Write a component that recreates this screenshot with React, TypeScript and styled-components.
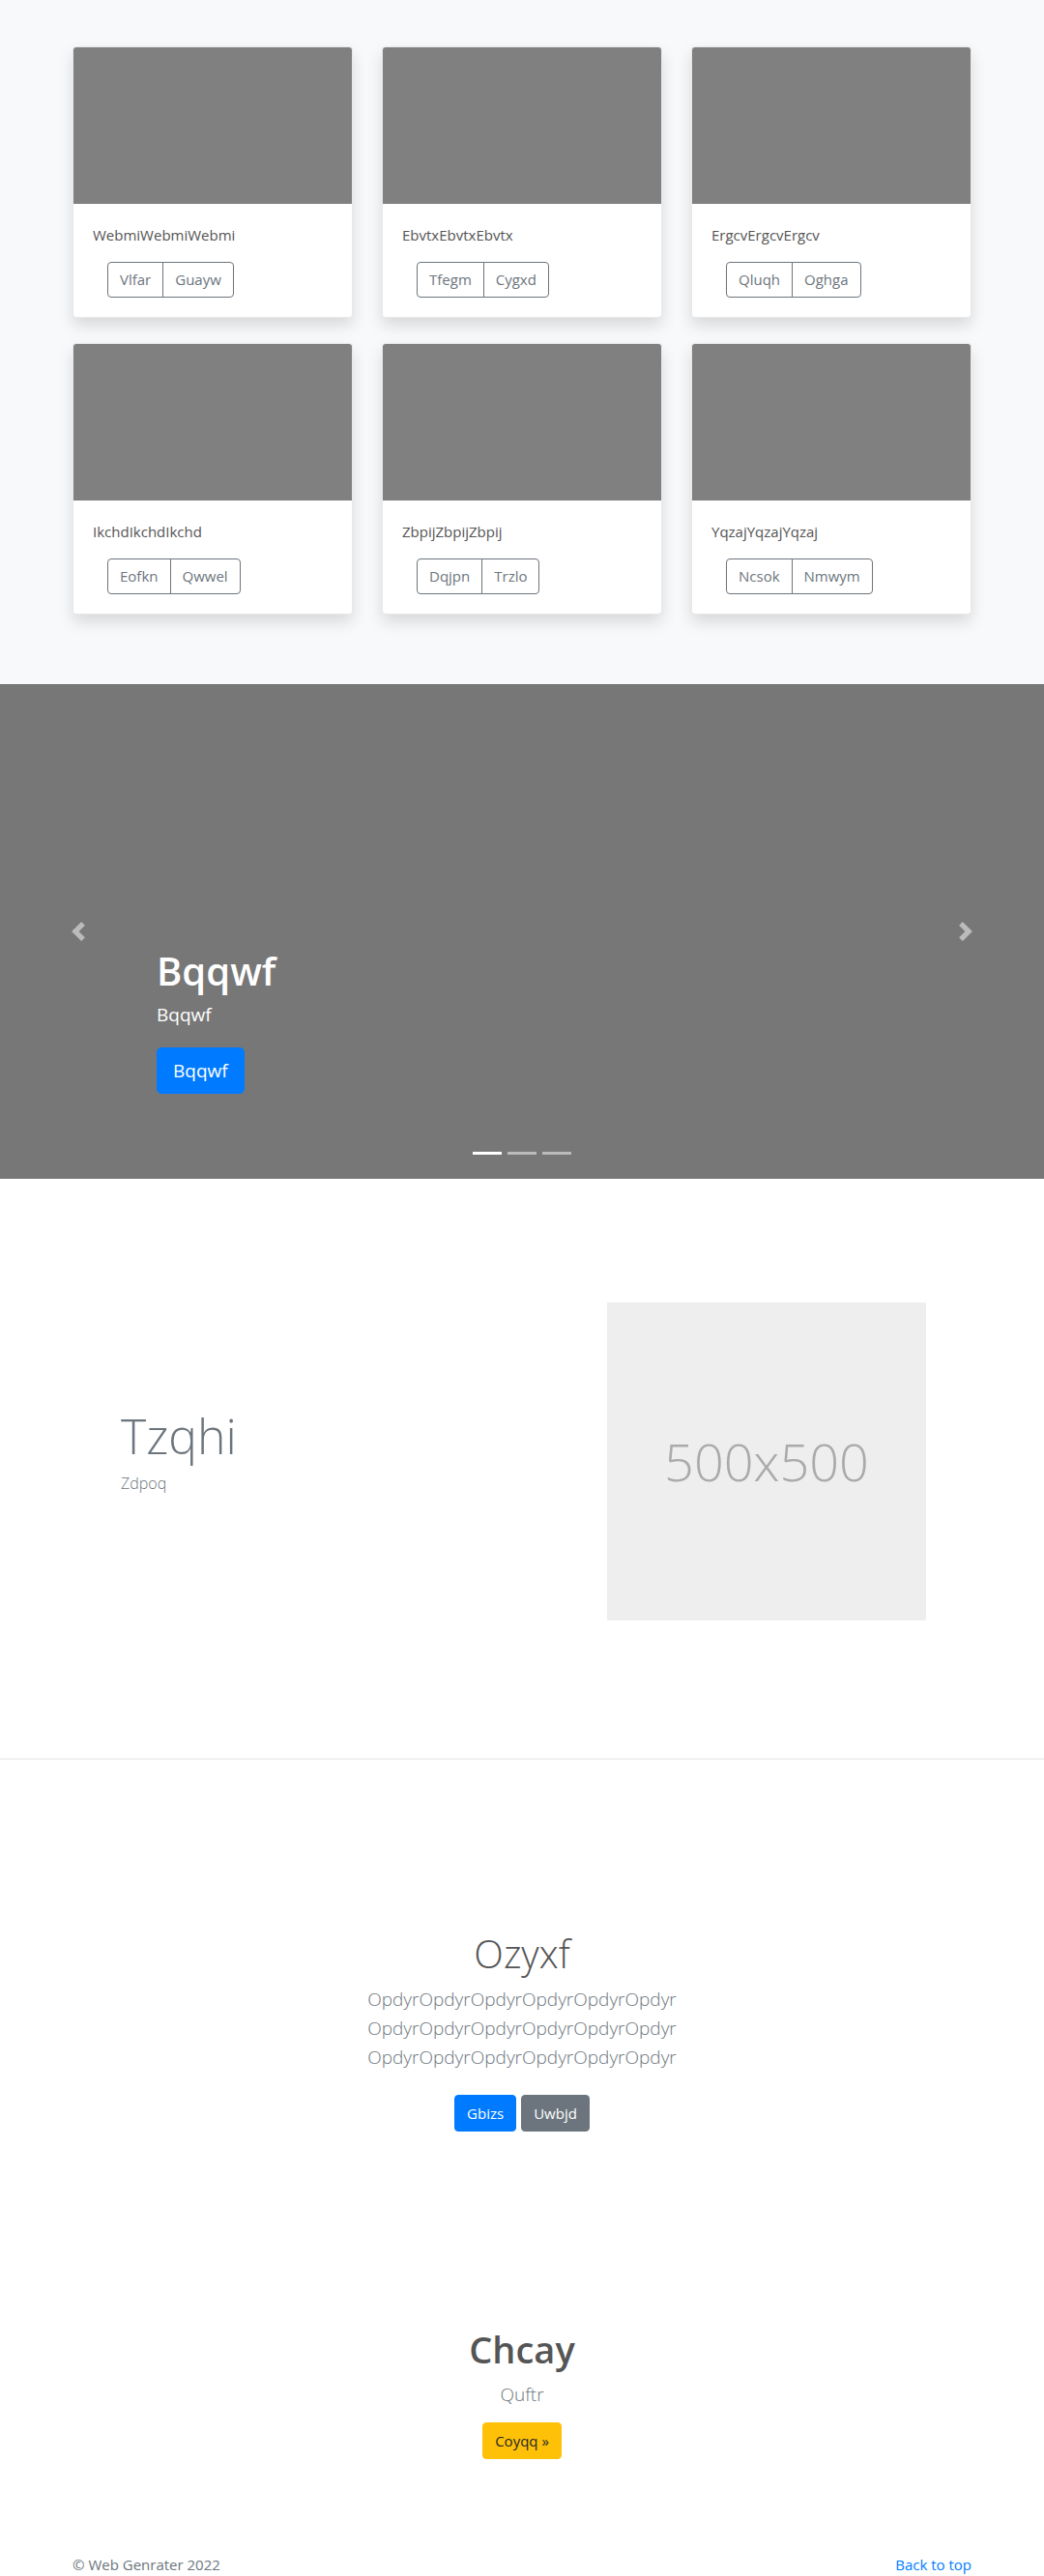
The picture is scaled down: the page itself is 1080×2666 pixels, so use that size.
import React from "react";
import styled, { createGlobalStyle } from "styled-components";

const GlobalStyle = createGlobalStyle`
  * { box-sizing: border-box; }
  body {
    margin: 0;
    font-family: "Open Sans", "Noto Sans", "Liberation Sans", sans-serif;
    font-size: 16px;
    line-height: 1.5;
    color: #212529;
    background: #fff;
  }
  h1, h2, h3, p { margin: 0; }
`;

const Album = styled.section`
  background: #f8f9fa;
  padding: 48px 0 72px;
`;

const Container = styled.div`
  width: 930px;
  margin: 0 auto;
`;

const CardGrid = styled.div`
  display: grid;
  grid-template-columns: repeat(3, 290px);
  column-gap: 30px;
  row-gap: 26px;
`;

const Card = styled.div`
  background: #fff;
  border: 1px solid rgba(0, 0, 0, 0.09);
  border-radius: 4px;
  box-shadow: 0 8px 16px rgba(0, 0, 0, 0.13);
  overflow: hidden;
`;

const CardImage = styled.div`
  height: 162px;
  background: #808080;
`;

const CardBody = styled.div`
  padding: 20px;
`;

const CardText = styled.p`
  font-size: 15px;
  line-height: 24px;
  color: #555;
  margin-bottom: 16px;
`;

const BtnGroup = styled.div`
  display: inline-flex;
  margin-left: 15px;
`;

const OutlineBtn = styled.button`
  font-family: inherit;
  font-size: 15px;
  line-height: 23px;
  padding: 6px 12px;
  color: #6c757d;
  background: transparent;
  border: 1px solid #6c757d;
  border-radius: 0;
  &:first-child {
    border-radius: 4px 0 0 4px;
  }
  &:last-child {
    border-radius: 0 4px 4px 0;
    margin-left: -1px;
  }
`;

const Carousel = styled.section`
  position: relative;
  height: 512px;
  background: #777777;
  display: flex;
  align-items: flex-end;
`;

const Caption = styled.div`
  padding: 0 0 88px 162px;
  color: #fff;
`;

const CaptionTitle = styled.h1`
  font-size: 40px;
  font-weight: 600;
  line-height: 48px;
  margin-bottom: 6px;
`;

const CaptionText = styled.p`
  font-size: 19px;
  line-height: 30px;
  margin-bottom: 19px;
`;

const PrimaryLgBtn = styled.button`
  font-family: inherit;
  font-size: 19px;
  line-height: 30px;
  padding: 8px 16px;
  color: #fff;
  background: #007bff;
  border: 1px solid #007bff;
  border-radius: 5px;
`;

const Control = styled.div<{ $side: "left" | "right" }>`
  position: absolute;
  top: 0;
  bottom: 0;
  ${(p) => (p.$side === "left" ? "left: 0;" : "right: 0;")}
  width: 162px;
  display: flex;
  align-items: center;
  justify-content: center;
  opacity: 0.5;
`;

const Indicators = styled.div`
  position: absolute;
  left: 0;
  right: 0;
  bottom: 25px;
  display: flex;
  justify-content: center;
  gap: 6px;
`;

const Indicator = styled.span<{ $active?: boolean }>`
  width: 30px;
  height: 3px;
  background: #fff;
  opacity: ${(p) => (p.$active ? 1 : 0.5)};
`;

const Featurette = styled.section`
  display: grid;
  grid-template-columns: 1fr 330px;
  align-items: center;
  padding: 128px 122px 143px 125px;
  border-bottom: 1px solid #e5e5e5;
`;

const FeatureText = styled.div`
  padding-bottom: 23px;
`;

const FeatureHeading = styled.h2`
  font-size: 50px;
  font-weight: 300;
  line-height: 60px;
  color: #6c757d;
  margin-bottom: 7px;
`;

const FeatureSub = styled.p`
  font-size: 16px;
  font-weight: 300;
  line-height: 24px;
  color: #6c757d;
`;

const Placeholder = styled.div`
  width: 330px;
  height: 329px;
  background: #eeeeee;
  color: #aaaaaa;
  font-size: 54px;
  font-weight: 300;
  display: flex;
  align-items: center;
  justify-content: center;
`;

const Jumbo = styled.section`
  padding-top: 177px;
  text-align: center;
`;

const JumboHeading = styled.h1`
  font-size: 40px;
  font-weight: 300;
  line-height: 48px;
  color: #555;
  margin-bottom: 8px;
`;

const Lead = styled.p`
  font-size: 19px;
  font-weight: 300;
  line-height: 30px;
  color: #6c757d;
  margin-bottom: 24px;
`;

const BtnRow = styled.div`
  display: flex;
  justify-content: center;
  gap: 5px;
`;

const Btn = styled.button<{ $variant: "primary" | "secondary" | "warning" }>`
  font-family: inherit;
  font-size: 15px;
  line-height: 24px;
  padding: 6px 12px;
  border-radius: 4px;
  border: 1px solid
    ${(p) =>
      p.$variant === "primary" ? "#007bff" : p.$variant === "secondary" ? "#6c757d" : "#ffc107"};
  background: ${(p) =>
    p.$variant === "primary" ? "#007bff" : p.$variant === "secondary" ? "#6c757d" : "#ffc107"};
  color: ${(p) => (p.$variant === "warning" ? "#212529" : "#fff")};
`;

const CallOut = styled.section`
  padding-top: 201px;
  text-align: center;
`;

const CallHeading = styled.h2`
  font-size: 38px;
  font-weight: 600;
  line-height: 48px;
  color: #555;
  margin-bottom: 8px;
`;

const CallSub = styled.p`
  font-size: 19px;
  font-weight: 300;
  line-height: 30px;
  color: #6c757d;
  margin-bottom: 14px;
`;

const Footer = styled.footer`
  width: 930px;
  margin: 0 auto;
  padding-top: 97px;
  display: flex;
  justify-content: space-between;
  font-size: 15px;
  line-height: 24px;
`;

const FooterText = styled.p`
  color: #6c757d;
`;

const FooterLink = styled.a`
  color: #007bff;
  text-decoration: none;
`;

const Chevron = ({ dir }: { dir: "left" | "right" }) => (
  <svg width="20" height="20" viewBox="0 0 8 8" fill="#fff">
    <path
      d={
        dir === "left"
          ? "M5.25 0l-4 4 4 4 1.5-1.5L4.25 4l2.5-2.5L5.25 0z"
          : "M2.75 0l-1.5 1.5L3.75 4l-2.5 2.5L2.75 8l4-4-4-4z"
      }
    />
  </svg>
);

const cards = [
  { text: "WebmiWebmiWebmi", a: "Vlfar", b: "Guayw" },
  { text: "EbvtxEbvtxEbvtx", a: "Tfegm", b: "Cygxd" },
  { text: "ErgcvErgcvErgcv", a: "Qluqh", b: "Oghga" },
  { text: "IkchdIkchdIkchd", a: "Eofkn", b: "Qwwel" },
  { text: "ZbpijZbpijZbpij", a: "Dqjpn", b: "Trzlo" },
  { text: "YqzajYqzajYqzaj", a: "Ncsok", b: "Nmwym" },
];

const line = "OpdyrOpdyrOpdyrOpdyrOpdyrOpdyr";

export default function App() {
  return (
    <>
      <GlobalStyle />
      <Album>
        <Container>
          <CardGrid>
            {cards.map((c) => (
              <Card key={c.text}>
                <CardImage />
                <CardBody>
                  <CardText>{c.text}</CardText>
                  <BtnGroup>
                    <OutlineBtn>{c.a}</OutlineBtn>
                    <OutlineBtn>{c.b}</OutlineBtn>
                  </BtnGroup>
                </CardBody>
              </Card>
            ))}
          </CardGrid>
        </Container>
      </Album>

      <Carousel>
        <Caption>
          <CaptionTitle>Bqqwf</CaptionTitle>
          <CaptionText>Bqqwf</CaptionText>
          <PrimaryLgBtn>Bqqwf</PrimaryLgBtn>
        </Caption>
        <Control $side="left">
          <Chevron dir="left" />
        </Control>
        <Control $side="right">
          <Chevron dir="right" />
        </Control>
        <Indicators>
          <Indicator $active />
          <Indicator />
          <Indicator />
        </Indicators>
      </Carousel>

      <Featurette>
        <FeatureText>
          <FeatureHeading>Tzqhi</FeatureHeading>
          <FeatureSub>Zdpoq</FeatureSub>
        </FeatureText>
        <Placeholder>500x500</Placeholder>
      </Featurette>

      <Jumbo>
        <JumboHeading>Ozyxf</JumboHeading>
        <Lead>
          {line}
          <br />
          {line}
          <br />
          {line}
        </Lead>
        <BtnRow>
          <Btn $variant="primary">Gbizs</Btn>
          <Btn $variant="secondary">Uwbjd</Btn>
        </BtnRow>
      </Jumbo>

      <CallOut>
        <CallHeading>Chcay</CallHeading>
        <CallSub>Quftr</CallSub>
        <Btn $variant="warning">Coyqq »</Btn>
      </CallOut>

      <Footer>
        <FooterText>© Web Genrater 2022</FooterText>
        <FooterLink href="#">Back to top</FooterLink>
      </Footer>
    </>
  );
}
